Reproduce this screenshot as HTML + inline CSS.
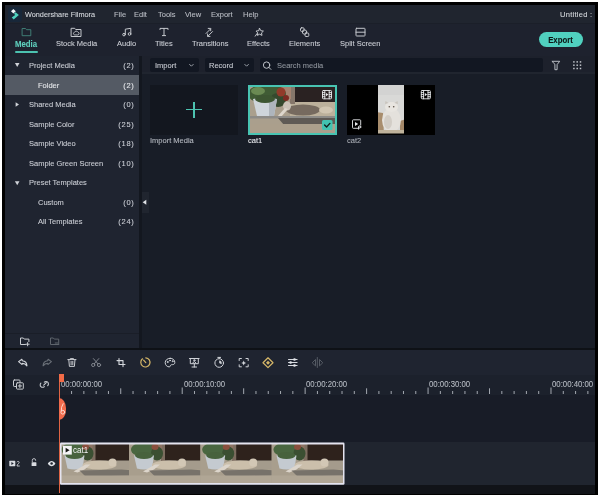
<!DOCTYPE html>
<html><head><meta charset="utf-8">
<style>
*{margin:0;padding:0;box-sizing:border-box}
html,body{width:600px;height:497px;overflow:hidden;background:#fff}
body{position:relative;font-family:"Liberation Sans",sans-serif;color:#c9ccd3;font-size:8px}
.a{position:absolute}
.t{position:absolute;white-space:nowrap;line-height:10px;height:10px;-webkit-text-stroke:0.1px currentColor;transform:scaleX(.9375);transform-origin:0 50%}
.r{text-align:right;transform-origin:100% 50%}
svg{position:absolute;overflow:visible}
.ic{fill:none;stroke:#c4c7cc;stroke-width:1;stroke-linecap:round;stroke-linejoin:round}
</style></head><body>
<div class="a" style="left:2px;top:2px;width:596px;height:493px;background:#000"></div>
<!-- title bar -->
<div class="a" style="left:5px;top:5px;width:590px;height:18px;background:#20252f"></div>
<!-- tabs toolbar -->
<div class="a" style="left:5px;top:23px;width:590px;height:32.5px;background:#1e222e"></div>
<div class="a" style="left:5px;top:23px;width:590px;height:1.2px;background:#1b1f29"></div>
<!-- sidebar -->
<div class="a" style="left:5px;top:55.5px;width:134px;height:292.5px;background:#1f2430"></div>
<!-- divider -->
<div class="a" style="left:139px;top:55.5px;width:2.5px;height:292.5px;background:#13171f"></div>
<!-- media panel -->
<div class="a" style="left:141.5px;top:55.5px;width:453.5px;height:292.5px;background:#181d27"></div>
<!-- media toolbar -->
<div class="a" style="left:141.5px;top:55.5px;width:453.5px;height:18px;background:#1d212c"></div>
<div class="a" style="left:141.5px;top:72.3px;width:453.5px;height:1.3px;background:#20252f"></div>
<!-- separator -->
<div class="a" style="left:5px;top:348px;width:590px;height:2px;background:#0e1116"></div>
<!-- timeline toolbar -->
<div class="a" style="left:5px;top:350px;width:590px;height:24.5px;background:#1f2430"></div>
<!-- ruler -->
<div class="a" style="left:5px;top:374.5px;width:590px;height:20.5px;background:#1c212c"></div>
<!-- track empty area -->
<div class="a" style="left:5px;top:395px;width:590px;height:47px;background:#181c27"></div>
<!-- track row -->
<div class="a" style="left:5px;top:442px;width:590px;height:42.5px;background:#20252f"></div>
<!-- bottom -->
<div class="a" style="left:5px;top:484.5px;width:590px;height:9px;background:#111318"></div>

<!-- ===== title bar text ===== -->
<div class="t" style="left:25px;top:9.5px;font-size:7.79px;color:#d5d8dd">Wondershare Filmora</div>
<div class="t" style="left:114px;top:9.5px;color:#b9bdc4">File</div>
<div class="t" style="left:134px;top:9.5px;color:#b9bdc4">Edit</div>
<div class="t" style="left:158px;top:9.5px;color:#b9bdc4">Tools</div>
<div class="t" style="left:185px;top:9.5px;color:#b9bdc4">View</div>
<div class="t" style="left:211px;top:9.5px;color:#b9bdc4">Export</div>
<div class="t" style="left:243px;top:9.5px;color:#b9bdc4">Help</div>
<div class="t" style="left:560px;top:9.5px;color:#d5d8dd;letter-spacing:0.3px">Untitled :</div>

<!-- ===== tabs ===== -->
<div class="t" style="left:15px;top:38.5px;font-weight:bold;color:#5fcfbd;font-size:8.32px">Media</div>
<div class="a" style="left:15px;top:51px;width:23px;height:2px;background:#4cc2b0;border-radius:1px"></div>
<div class="t" style="left:56px;top:38.5px">Stock Media</div>
<div class="t" style="left:117px;top:38.5px">Audio</div>
<div class="t" style="left:155px;top:38.5px">Titles</div>
<div class="t" style="left:192px;top:38.5px">Transitions</div>
<div class="t" style="left:247px;top:38.5px">Effects</div>
<div class="t" style="left:289px;top:38.5px">Elements</div>
<div class="t" style="left:340px;top:38.5px">Split Screen</div>

<!-- export button -->
<div class="a" style="left:538.5px;top:32px;width:44.5px;height:15px;border-radius:7.5px;background:#50d1bf"></div>
<div class="t" style="left:538px;top:34.5px;width:45px;text-align:center;transform-origin:50% 50%;font-weight:bold;color:#0e1716;font-size:8.32px">Export</div>

<!-- ===== sidebar ===== -->
<div class="a" style="left:5px;top:75px;width:134px;height:20px;background:#545a64"></div>
<div class="t" style="left:29px;top:61px">Project Media</div><div class="t r" style="left:96px;width:38.5px;letter-spacing:0.75px;top:61px">(2)</div>
<div class="t" style="left:38px;top:80.5px;color:#e4e6ea">Folder</div><div class="t r" style="left:96px;width:38.5px;letter-spacing:0.75px;top:80.5px;color:#e4e6ea">(2)</div>
<div class="t" style="left:29px;top:100px">Shared Media</div><div class="t r" style="left:96px;width:38.5px;letter-spacing:0.75px;top:100px">(0)</div>
<div class="t" style="left:29px;top:119.5px">Sample Color</div><div class="t r" style="left:96px;width:38.5px;letter-spacing:0.75px;top:119.5px">(25)</div>
<div class="t" style="left:29px;top:139px">Sample Video</div><div class="t r" style="left:96px;width:38.5px;letter-spacing:0.75px;top:139px">(18)</div>
<div class="t" style="left:29px;top:158.5px">Sample Green Screen</div><div class="t r" style="left:96px;width:38.5px;letter-spacing:0.75px;top:158.5px">(10)</div>
<div class="t" style="left:29px;top:178px">Preset Templates</div>
<div class="t" style="left:38px;top:197.5px">Custom</div><div class="t r" style="left:96px;width:38.5px;letter-spacing:0.75px;top:197.5px">(0)</div>
<div class="t" style="left:38px;top:217px">All Templates</div><div class="t r" style="left:96px;width:38.5px;letter-spacing:0.75px;top:217px">(24)</div>

<!-- ===== media toolbar ===== -->
<div class="a" style="left:150px;top:58px;width:49px;height:14px;background:#121722;border-radius:2px"></div>
<div class="t" style="left:155px;top:60.5px">Import</div>
<div class="a" style="left:205px;top:58px;width:49px;height:14px;background:#121722;border-radius:2px"></div>
<div class="t" style="left:209px;top:60.5px">Record</div>
<div class="a" style="left:260px;top:58px;width:283px;height:14px;background:#121722;border-radius:2px"></div>
<div class="t" style="left:276.5px;top:60.5px;color:#8e939b">Search media</div>

<!-- ===== media items ===== -->
<div class="a" style="left:150px;top:85px;width:88px;height:50px;background:#13171f"></div>
<div class="t" style="left:150px;top:136px;color:#b5b9c0">Import Media</div>
<div class="t" style="left:248px;top:136px;color:#e8eaee">cat1</div>
<div class="t" style="left:347px;top:136px;color:#a9adb4">cat2</div>


<!-- ===== icons: logo ===== -->
<div class="a" style="left:7.5px;top:7px;width:14.5px;height:14.5px;border-radius:3px;background:#182739"></div>
<svg style="left:0;top:0" width="600" height="497">
 <polygon points="13.4,9 15.8,11.3 13.4,13.6 11,11.3" fill="#f2f4f6"/>
 <polygon points="15.6,12.3 18.9,14.9 13.7,19.5 11.7,17.6 15.2,14.9 14,13.8" fill="#4fd0bd"/>
</svg>
<!-- tab icons -->
<svg style="left:0;top:0" width="600" height="497">
 <g class="ic" style="stroke:#43877d;stroke-width:0.9">
  <path d="M22.5,28.5 h3 l1,1.2 h4.3 v6 h-8.3 z"/>
 </g>
 <g class="ic">
  <path d="M71.5,28.3 h3.2 l1,1.2 h5.3 v7 h-9.5 z"/>
  <path d="M74.3,34.8 a1.3,1.3 0 0 1 0.2,-2.5 a1.9,1.9 0 0 1 3.5,0 a1.3,1.3 0 0 1 0.2,2.5 z" style="stroke-width:0.9"/>
  <circle cx="124" cy="34.6" r="1.3"/><circle cx="129.5" cy="34" r="1.3"/>
  <path d="M125.3,34.6 v-5.4 l5.5,-0.9 v5.7"/>
  <path d="M160,29.5 v-1.1 h8 v1.1 M164,28.4 v7.2 M162.4,35.6 h3.2"/>
  <path d="M206,33.5 l4.5,-4.5 M208.2,28.4 h2.5 v2.4 M212.5,31.6 l-4.6,4.6 M210,36.4 h-2.4 v-2.4"/>
  <path d="M259.6,28.4 l1.2,2.3 l2.6,0.4 l-1.9,1.8 l0.5,2.5 l-2.4,-1.2 l-2.2,1.2 l0.4,-2.5 l-1.8,-1.8 l2.5,-0.4 z M257,33.6 l-1.8,2.6"/>
  <rect x="300.5" y="27.8" width="3.6" height="3.6" rx="1"/>
  <circle cx="304.5" cy="32" r="2.2"/>
  <rect x="305" y="33" width="3.8" height="3.5" rx="1"/>
  <rect x="356" y="28.3" width="9" height="7.7" rx="0.6"/>
  <path d="M356,32.2 h9"/>
 </g>
</svg>

<!-- media toolbar icons -->
<svg style="left:0;top:0" width="600" height="497">
 <g class="ic" style="stroke:#9aa0a8">
  <path d="M189.6,64.4 l1.8,1.8 l1.8,-1.8"/>
  <path d="M244.8,64.4 l1.8,1.8 l1.8,-1.8"/>
 </g>
 <g class="ic" style="stroke:#c0c4ca">
  <circle cx="266.6" cy="65.1" r="3.2"/>
  <path d="M268.9,67.4 l2,2"/>
  <path d="M552.3,61.3 h7.4 l-2.6,3.3 v5.1 h-2.2 v-5.1 z" style="stroke-width:0.95"/>
 </g>
 <g fill="#bfc3c9">
  <rect x="573.15" y="61.15" width="1.5" height="1.5"/><rect x="576.45" y="61.15" width="1.5" height="1.5"/><rect x="579.75" y="61.15" width="1.5" height="1.5"/>
  <rect x="573.15" y="64.45" width="1.5" height="1.5"/><rect x="576.45" y="64.45" width="1.5" height="1.5"/><rect x="579.75" y="64.45" width="1.5" height="1.5"/>
  <rect x="573.15" y="67.75" width="1.5" height="1.5"/><rect x="576.45" y="67.75" width="1.5" height="1.5"/><rect x="579.75" y="67.75" width="1.5" height="1.5"/>
 </g>
</svg>

<!-- sidebar triangles -->
<svg style="left:0;top:0" width="600" height="497">
 <g fill="#d0d3d8">
  <polygon points="14.9,62.9 19.5,62.9 17.2,66.9"/>
  <polygon points="15.6,102.2 19,104.5 15.6,106.8"/>
  <polygon points="14.9,181.2 19.5,181.2 17.2,185.2"/>
 </g>
</svg>
<!-- import plus -->
<div class="a" style="left:186px;top:108.8px;width:16px;height:1.5px;background:#4cc2b0"></div>
<div class="a" style="left:193.3px;top:101.5px;width:1.5px;height:16px;background:#4cc2b0"></div>

<!-- ===== cat1 thumbnail ===== -->
<svg style="left:0;top:0" width="600" height="497">
 <defs>
  <filter id="bl" x="-5%" y="-5%" width="110%" height="110%"><feGaussianBlur stdDeviation="0.45"/></filter>
  <clipPath id="c1"><rect x="0" y="0" width="85" height="46"/></clipPath>
  <g id="scene">
   <rect x="-2" y="-2" width="90" height="50" fill="#aa9f8d"/>
   <rect x="40" y="13" width="48" height="17" fill="#bcb09b"/>
   <rect x="44" y="-2" width="44" height="17" fill="#2c2320"/>
   <rect x="40" y="-2" width="5" height="19" fill="#85766a"/>
   <rect x="28" y="-2" width="13" height="14" fill="#a5836f"/>
   <ellipse cx="17" cy="7" rx="19" ry="10" fill="#405b35"/>
   <ellipse cx="8" cy="4" rx="7" ry="4" fill="#6a8a52"/>
   <ellipse cx="28" cy="13" rx="8" ry="7" fill="#35492d"/>
   <ellipse cx="31" cy="5" rx="4.5" ry="4.5" fill="#923b2b"/>
   <ellipse cx="36" cy="11" rx="3" ry="3" fill="#7c2c22"/>
   <path d="M3,12 Q15,9 27,12 L24,29 Q15,31 7,29 Z" fill="#cfd5db"/>
   <path d="M19,12 L27,12 L24,29 Q21,30 19,30 Z" fill="#aeb5bc"/>
   <ellipse cx="15" cy="12" rx="10" ry="4" fill="#3d5632"/>
   <ellipse cx="53" cy="23" rx="17" ry="5.5" fill="#766b5e"/>
   <ellipse cx="37" cy="19" rx="4" ry="4.5" fill="#cbc3b8"/>
   <path d="M27,30 L35,21 L38,22 L31,30 Z" fill="#ddd6cc"/>
   <ellipse cx="76" cy="23" rx="7" ry="3.5" fill="#d1c5b1"/>
   <rect x="-2" y="29" width="90" height="2.5" fill="#8d8b87"/>
   <path d="M28,31 L88,31 L88,37 L34,38 Z" fill="#5e5a55"/>
   <rect x="-2" y="37" width="90" height="11" fill="#ab9f8c"/>
  </g>
 </defs>
 <rect x="248" y="85" width="89" height="50" fill="#48c4b2"/>
 <g transform="translate(250,87)" clip-path="url(#c1)"><use href="#scene" filter="url(#bl)"/></g>
 <g class="ic" style="stroke:#e8eaec;stroke-width:0.9">
  <rect x="322.5" y="90.5" width="9" height="8.3" rx="0.8"/>
  <path d="M324.8,90.5 v8.3 M329.2,90.5 v8.3 M322.5,92.6 h2.3 M322.5,94.6 h2.3 M322.5,96.7 h2.3 M329.2,92.6 h2.3 M329.2,94.6 h2.3 M329.2,96.7 h2.3"/>
 </g>
 <polygon points="326,93 328.4,94.6 326,96.2" fill="#e8eaec"/>
 <rect x="322" y="120" width="10.5" height="10" rx="1.5" fill="#42c3b1"/>
 <path d="M324.6,125 l2,2 l3.3,-3.6" fill="none" stroke="#10201e" stroke-width="1.4" stroke-linecap="round" stroke-linejoin="round"/>
</svg>

<!-- ===== cat2 thumbnail ===== -->
<div class="a" style="left:347px;top:85px;width:88px;height:50px;background:#000"></div>
<svg style="left:0;top:0" width="600" height="497">
 <defs><clipPath id="c2"><rect x="378" y="85" width="26" height="48.5"/></clipPath></defs>
 <g clip-path="url(#c2)">
  <g filter="url(#bl)">
  <rect x="376" y="83" width="30" height="53" fill="#d9d9d7"/>
  <rect x="376" y="83" width="30" height="12" fill="#d3d3d2"/>
  <path d="M376,112 L383,113 L384,136 L376,136Z" fill="#a88d6d"/>
  <path d="M406,119 L400,121 L400,136 L406,136Z" fill="#a48869"/>
  <ellipse cx="391.5" cy="120" rx="9.5" ry="12" fill="#e4e1dc"/>
  <ellipse cx="388" cy="122" rx="4" ry="7" fill="#d2cdc6"/>
  <ellipse cx="391.5" cy="107" rx="6.5" ry="5" fill="#e8e5e0"/>
  <path d="M385,104 L385.5,101 L388.5,103Z M394.5,103 L397.5,101 L398,104Z" fill="#c9c4bd"/>
  <circle cx="389.3" cy="106.8" r="0.8" fill="#5a4e44"/><circle cx="393.7" cy="106.8" r="0.8" fill="#5a4e44"/>
  <rect x="376" y="130" width="30" height="6" fill="#bfb29b"/>
  </g>
 </g>
 <g class="ic" style="stroke:#e8eaec;stroke-width:0.9">
  <rect x="421.3" y="90.5" width="9" height="8.3" rx="0.8"/>
  <path d="M423.6,90.5 v8.3 M428,90.5 v8.3 M421.3,92.6 h2.3 M421.3,94.6 h2.3 M421.3,96.7 h2.3 M428,92.6 h2.3 M428,94.6 h2.3 M428,96.7 h2.3"/>
  <path d="M358.5,128.3 h-5.2 a0.8,0.8 0 0 1 -0.8,-0.8 v-6.9 a0.8,0.8 0 0 1 0.8,-0.8 h6.6 a0.8,0.8 0 0 1 0.8,0.8 v4.6"/>
  <circle cx="359.7" cy="127" r="1.1"/>
  <path d="M358.6,127 v2.2"/>
 </g>
 <polygon points="424.8,93 427.2,94.6 424.8,96.2" fill="#e8eaec"/>
 <polygon points="355,122 358.2,124 355,126" fill="#e8eaec"/>
</svg>

<!-- ===== timeline toolbar icons ===== -->
<svg style="left:0;top:0" width="600" height="497">
 <g class="ic" style="stroke:#d4d7dc;stroke-width:1.2">
  <path d="M18.6,361.6 L21.9,359.3 L22.3,360.7 C25,360.9 26.8,362.6 26.9,365.8 C25.6,364.1 24.3,363.5 22.4,363.4 L21.9,364.4 Z" style="stroke-width:1.15"/>
 </g>
 <g class="ic" style="stroke:#6a7078;stroke-width:1.2">
  <path d="M51.4,361.6 L48.1,359.3 L47.7,360.7 C45,360.9 43.2,362.6 43.1,365.8 C44.4,364.1 45.7,363.5 47.6,363.4 L48.1,364.4 Z" style="stroke-width:1.1"/>
 </g>
 <g class="ic" style="stroke:#c9ccd1;stroke-width:1">
  <path d="M67.8,359.6 h8.2 M70.3,359.6 v-1 h3.2 v1 M68.8,359.6 l0.6,6.8 h5 l0.6,-6.8 M71.1,361.4 v3.4 M72.8,361.4 v3.4"/>
 </g>
 <g class="ic" style="stroke:#80858d;stroke-width:1">
  <circle cx="93.2" cy="365" r="1.6"/><circle cx="99" cy="365" r="1.6"/>
  <path d="M94.2,363.8 l4.6,-5.2 M98,363.8 l-4.6,-5.2"/>
 </g>
 <g class="ic" style="stroke:#d4d7dc;stroke-width:1.1">
  <path d="M119,358.5 v6 h6 M117,360.6 h6 v6"/>
 </g>
 <g class="ic" style="stroke:#d6b768;stroke-width:1.2">
  <path d="M142.5,358.8 a4.6,4.6 0 1 0 3.3,-1"/>
  <path d="M143.6,360.2 l2.2,2.4"/>
 </g>
 <g class="ic" style="stroke:#d0d3d8;stroke-width:1">
  <path d="M170.2,358.3 c-3,0 -5,2 -5,4.3 c0,2.6 2,4.3 4,4.3 c1.2,0 1,-1.3 1.6,-1.9 c0.8,-0.8 3.8,0.5 4,-2.4 c0.2,-2.6 -2,-4.3 -4.6,-4.3z"/>
  <circle cx="167.6" cy="362" r="0.5"/><circle cx="170" cy="360.5" r="0.5"/><circle cx="172.6" cy="361.2" r="0.5"/>
 </g>
 <g class="ic" style="stroke:#d0d3d8;stroke-width:1">
  <path d="M189.5,358.5 h9.6 M190.3,358.5 v5.2 h8 v-5.2 M194.3,363.7 v3.3 M192,367 h4.6"/>
  <circle cx="194.3" cy="360.3" r="0.7"/><path d="M192.6,363 l1.7,-1.5 l1.7,1.5"/>
 </g>
 <g class="ic" style="stroke:#d0d3d8;stroke-width:1">
  <circle cx="219.2" cy="363" r="4.3"/><path d="M217.8,357.4 h2.8 M219.2,357.4 v1.2"/>
 </g>
 <path d="M219.2,363 v-2.6 a2.6,2.6 0 0 1 2.2,3.9 z" fill="#d0d3d8"/>
 <g class="ic" style="stroke:#d0d3d8;stroke-width:1">
  <path d="M239.2,360.5 v-2 h2.2 M246,358.5 h2.2 v2 M248.2,364.8 v2 h-2.2 M241.4,366.8 h-2.2 v-2"/>
 </g>
 <path d="M243.7,360.6 l0.7,1.7 l1.7,0.7 l-1.7,0.7 l-0.7,1.7 l-0.7,-1.7 l-1.7,-0.7 l1.7,-0.7z" fill="#d8dbe0"/>
 <g class="ic" style="stroke:#d6b768;stroke-width:1.2">
  <path d="M268,357.8 l5,4.9 l-5,4.9 l-5,-4.9z"/>
 </g>
 <rect x="266.6" y="361.3" width="2.8" height="2.8" transform="rotate(45 268 362.7)" fill="#d6b768"/>
 <g class="ic" style="stroke:#d8dbe0;stroke-width:1">
  <path d="M288.5,359.5 h8.6 M288.5,362.5 h8.6 M288.5,365.5 h8.6"/>
 </g>
 <g fill="#e2e5e9"><circle cx="294.5" cy="359.5" r="1.3"/><circle cx="290.6" cy="362.5" r="1.3"/><circle cx="294.5" cy="365.5" r="1.3"/></g>
 <g class="ic" style="stroke:#555b64;stroke-width:1">
  <path d="M317.3,357.5 v10 M312.5,362.5 l3,-3 v6z M322.5,362.5 l-3,-3 v6z"/>
 </g>
</svg>

<!-- ===== ruler ===== -->
<svg style="left:0;top:0" width="600" height="497">
 <g class="ic" style="stroke:#c9ccd1;stroke-width:1">
  <rect x="13.5" y="380" width="6.5" height="6.5" rx="0.8"/>
  <rect x="16.5" y="382.8" width="6.8" height="6.3" rx="0.8" fill="#1c212b"/>
  <path d="M19.9,384.3 v3.3 M18.25,385.95 h3.3"/>
  <path d="M44.3,382.2 a2.4,2.4 0 1 1 3.4,3.4 M44.3,386.6 a2.4,2.4 0 1 1 -3.4,-3.4 M43.7,385.2 l2.6,-2.6" style="stroke-width:1.1"/>
 </g>
 <rect x="71.06" y="391" width="1" height="3" fill="#a3a8b0"/><rect x="83.36" y="391" width="1" height="3" fill="#a3a8b0"/><rect x="95.65" y="391" width="1" height="3" fill="#a3a8b0"/><rect x="107.94" y="391" width="1" height="3" fill="#a3a8b0"/><rect x="120.23" y="388.3" width="1" height="5.7" fill="#a3a8b0"/><rect x="132.53" y="391" width="1" height="3" fill="#a3a8b0"/><rect x="144.82" y="391" width="1" height="3" fill="#a3a8b0"/><rect x="157.11" y="391" width="1" height="3" fill="#a3a8b0"/><rect x="169.41" y="391" width="1" height="3" fill="#a3a8b0"/><rect x="181.70" y="387.5" width="1" height="6.5" fill="#a3a8b0"/><rect x="193.99" y="391" width="1" height="3" fill="#a3a8b0"/><rect x="206.29" y="391" width="1" height="3" fill="#a3a8b0"/><rect x="218.58" y="391" width="1" height="3" fill="#a3a8b0"/><rect x="230.87" y="391" width="1" height="3" fill="#a3a8b0"/><rect x="243.16" y="388.3" width="1" height="5.7" fill="#a3a8b0"/><rect x="255.46" y="391" width="1" height="3" fill="#a3a8b0"/><rect x="267.75" y="391" width="1" height="3" fill="#a3a8b0"/><rect x="280.04" y="391" width="1" height="3" fill="#a3a8b0"/><rect x="292.34" y="391" width="1" height="3" fill="#a3a8b0"/><rect x="304.63" y="387.5" width="1" height="6.5" fill="#a3a8b0"/><rect x="316.92" y="391" width="1" height="3" fill="#a3a8b0"/><rect x="329.22" y="391" width="1" height="3" fill="#a3a8b0"/><rect x="341.51" y="391" width="1" height="3" fill="#a3a8b0"/><rect x="353.80" y="391" width="1" height="3" fill="#a3a8b0"/><rect x="366.09" y="388.3" width="1" height="5.7" fill="#a3a8b0"/><rect x="378.39" y="391" width="1" height="3" fill="#a3a8b0"/><rect x="390.68" y="391" width="1" height="3" fill="#a3a8b0"/><rect x="402.97" y="391" width="1" height="3" fill="#a3a8b0"/><rect x="415.27" y="391" width="1" height="3" fill="#a3a8b0"/><rect x="427.56" y="387.5" width="1" height="6.5" fill="#a3a8b0"/><rect x="439.85" y="391" width="1" height="3" fill="#a3a8b0"/><rect x="452.15" y="391" width="1" height="3" fill="#a3a8b0"/><rect x="464.44" y="391" width="1" height="3" fill="#a3a8b0"/><rect x="476.73" y="391" width="1" height="3" fill="#a3a8b0"/><rect x="489.02" y="388.3" width="1" height="5.7" fill="#a3a8b0"/><rect x="501.32" y="391" width="1" height="3" fill="#a3a8b0"/><rect x="513.61" y="391" width="1" height="3" fill="#a3a8b0"/><rect x="525.90" y="391" width="1" height="3" fill="#a3a8b0"/><rect x="538.20" y="391" width="1" height="3" fill="#a3a8b0"/><rect x="550.49" y="387.5" width="1" height="6.5" fill="#a3a8b0"/><rect x="562.78" y="391" width="1" height="3" fill="#a3a8b0"/><rect x="575.08" y="391" width="1" height="3" fill="#a3a8b0"/><rect x="587.37" y="391" width="1" height="3" fill="#a3a8b0"/>
</svg>
<div class="t" style="left:60.6px;top:379.3px;font-size:8.32px;color:#b4b9c0">00:00:00:00</div><div class="t" style="left:183.5px;top:379.3px;font-size:8.32px;color:#b4b9c0">00:00:10:00</div><div class="t" style="left:306.4px;top:379.3px;font-size:8.32px;color:#b4b9c0">00:00:20:00</div><div class="t" style="left:429.4px;top:379.3px;font-size:8.32px;color:#b4b9c0">00:00:30:00</div><div class="t" style="left:552.3px;top:379.3px;font-size:8.32px;color:#b4b9c0">00:00:40:00</div>

<!-- ===== sidebar bottom ===== -->
<div class="a" style="left:5px;top:333px;width:134px;height:1px;background:#1a1e28"></div>
<svg style="left:0;top:0" width="600" height="497">
 <g class="ic" style="stroke:#c9ccd1;stroke-width:1">
  <path d="M25.5,344.5 h-5 v-6.5 h2.8 l1,1.1 h4.6 v2.5"/>
  <path d="M27.6,342.6 v3.2 M26,344.2 h3.2"/>
 </g>
 <g class="ic" style="stroke:#5e646c;stroke-width:1">
  <path d="M58.7,344.5 h-8.2 v-6.5 h2.8 l1,1.1 h4.4 v5.4"/>
  <path d="M55.2,343 h2.4"/>
 </g>
</svg>
<!-- collapse tab -->
<div class="a" style="left:141.5px;top:191.7px;width:7px;height:21px;background:#20252f"></div>
<svg style="left:0;top:0" width="600" height="497"><polygon points="146.3,199.7 146.3,204.7 142.7,202.2" fill="#e0e3e7"/></svg>

<!-- ===== track header ===== -->
<svg style="left:0;top:0" width="600" height="497">
 <rect x="9.3" y="460.8" width="6" height="5.4" rx="0.6" fill="#d8dbe0"/>
 <polygon points="11.4,461.9 13.8,463.5 11.4,465.1" fill="#1f2430"/>
 <g class="ic" style="stroke:#c9ccd1;stroke-width:0.9">
  <path d="M17,461.8 c0.4,-0.6 2.2,-0.6 2.2,0.6 c0,1 -2.2,2 -2.2,3.6 h2.4"/>
  <path d="M32.3,461.6 v-1.3 a1.7,1.7 0 0 1 3.4,0"/>
 </g>
 <rect x="31.6" y="462.3" width="4.8" height="3.8" rx="0.4" fill="#d8dbe0"/>
 <path d="M47.8,463.6 c2,-3.6 5.6,-3.6 7.6,0 c-2,3.6 -5.6,3.6 -7.6,0z" fill="#dfe2e6"/>
 <circle cx="51.6" cy="463.6" r="1.25" fill="#1f2430"/>
</svg>

<!-- ===== timeline clip ===== -->
<svg style="left:0;top:0" width="600" height="497">
 <defs>
  <clipPath id="cc"><rect x="61.5" y="444.5" width="281.5" height="38.5"/></clipPath>
  <g id="scene2">
   <rect x="-2" y="-2" width="75" height="43" fill="#a89e8d"/>
   <rect x="28" y="13" width="45" height="12" fill="#a49b8c"/>
   <rect x="33" y="-2" width="40" height="18" fill="#2d231f"/>
   <rect x="30" y="-2" width="4" height="19" fill="#7c6c5f"/>
   <rect x="21" y="-2" width="10" height="11" fill="#8d7262"/>
   <ellipse cx="14" cy="5" rx="14" ry="7.5" fill="#4a6640"/>
   <ellipse cx="26" cy="9" rx="6" ry="7" fill="#3a4f32"/>
   <ellipse cx="24" cy="2.5" rx="3.5" ry="3" fill="#8a4f3e"/>
   <path d="M3,11 Q13,9 23,11 L21,24 Q13,26 6,24 Z" fill="#c4cad0"/>
   <ellipse cx="13" cy="11" rx="9" ry="3.5" fill="#47623d"/>
   <ellipse cx="38" cy="20.5" rx="17" ry="4.5" fill="#cbbfab"/>
   <ellipse cx="51" cy="18" rx="4" ry="4" fill="#d2c7b5"/>
   <path d="M12,27 L24,20 L29,20 L23,25 L16,28Z" fill="#dcd5cb"/>
   <path d="M18,26 L60,25 L73,26 L73,31 L24,32 Z" fill="#77726b"/>
   <rect x="-2" y="31" width="75" height="10" fill="#b0a695"/>
  </g>
 </defs>
 <rect x="60" y="442.5" width="284.5" height="42.3" rx="1.2" fill="#e4e4f0"/>
 <g clip-path="url(#cc)" filter="url(#bl)">
  <use href="#scene2" x="61.5" y="444.5"/>
  <use href="#scene2" x="131" y="444.5"/>
  <use href="#scene2" x="202.2" y="444.5"/>
  <use href="#scene2" x="273.5" y="444.5"/>
 </g>
 <rect x="63" y="445.8" width="8.8" height="8.8" fill="#f4f4f6"/>
 <polygon points="65.6,447.8 69.6,450.2 65.6,452.6" fill="#111"/>
</svg>
<div class="t" style="left:73.3px;top:445px;color:#f4f4f6;font-size:8.53px;-webkit-text-stroke:0">cat1</div>

<!-- ===== playhead ===== -->
<div class="a" style="left:58.8px;top:374px;width:1.2px;height:119px;background:#df6444"></div>
<div class="a" style="left:58.6px;top:374px;width:5px;height:7.5px;background:#f26b47"></div>
<div class="a" style="left:59px;top:397.6px;width:7.2px;height:22.4px;background:#f06a4b;border-radius:0 7px 7px 0/0 10px 10px 0"></div>
<svg style="left:0;top:0" width="600" height="497">
 <g class="ic" style="stroke:#fde2d8;stroke-width:0.9">
  <circle cx="62.8" cy="412.2" r="1.9"/>
  <path d="M61.3,410.8 l0.3,-3.5 l1.6,-3.6"/>
 </g>
</svg>
<!--END-->



</body></html>
